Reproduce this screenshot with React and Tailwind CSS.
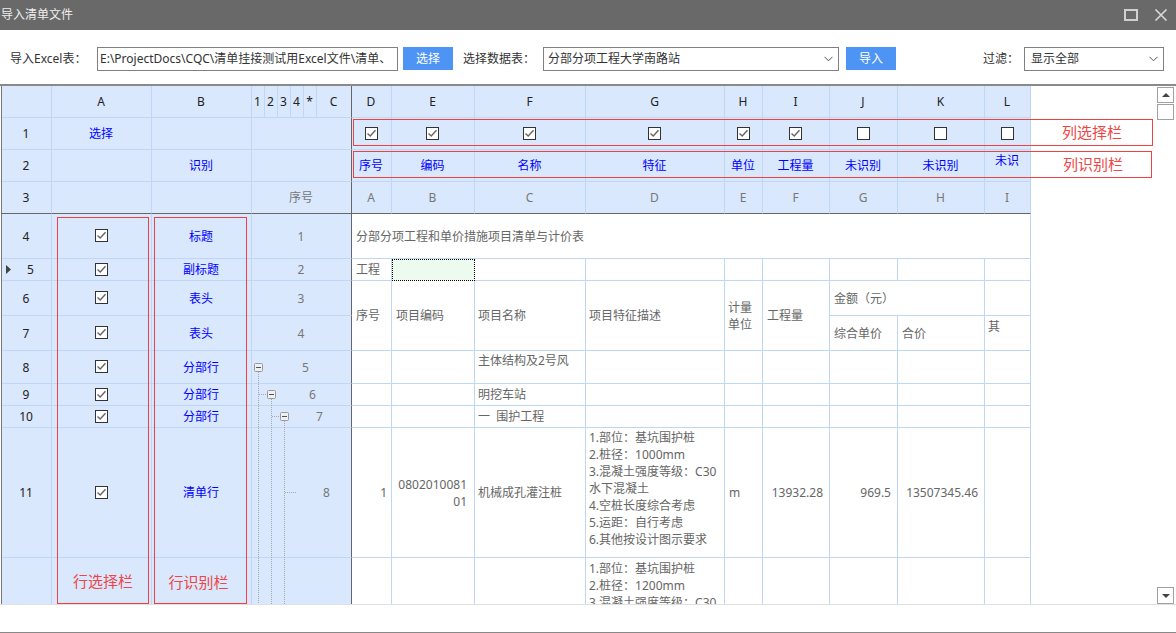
import React from 'react';

const colWidths = [
  'w-[50px]', 'w-[100px]', 'w-[100px]', 'w-[13px]', 'w-[13px]', 'w-[13px]', 'w-[13px]', 'w-[13px]', 'w-[35px]',
  'w-[40px]', 'w-[83px]', 'w-[111px]', 'w-[139px]', 'w-[38px]', 'w-[67px]', 'w-[68px]', 'w-[87px]', 'w-[46px]',
];

const rowColumns = ['D', 'E', 'F', 'G', 'H', 'I', 'J', 'K', 'L'];
const pickRow = [true, true, true, true, true, true, false, false, false];
const matchRow = ['序号', '编码', '名称', '特征', '单位', '工程量', '未识别', '未识别'];
const sourceRow = ['A', 'B', 'C', 'D', 'E', 'F', 'G', 'H', 'I'];

const spec11 = ['1.部位：基坑围护桩', '2.桩径：1000mm', '3.混凝土强度等级：C30', '水下混凝土', '4.空桩长度综合考虑', '5.运距：自行考虑', '6.其他按设计图示要求'];
const spec12 = ['1.部位：基坑围护桩', '2.桩径：1200mm', '3.混凝土强度等级：C30'];

const Check = ({ checked = true }) => (
  <div className="flex justify-center pb-px">
    <span className="flex w-[13px] h-[13px] border border-[#333] bg-white items-center justify-center">
      {checked && (
        <svg width="11" height="11" viewBox="0 0 11 11" fill="none">
          <path d="M1.5 5.5 L4.2 8 L9.5 2.2" stroke="#666" strokeWidth="1.4" />
        </svg>
      )}
    </span>
  </div>
);

const Chevron = () => (
  <svg width="9" height="6" viewBox="0 0 9 6" fill="none">
    <path d="M0.5 0.8 L4.5 4.8 L8.5 0.8" stroke="#555" strokeWidth="1" />
  </svg>
);

// frozen pane cell
const H = ({ children, className = '', ...rest }) => (
  <td {...rest} className={`bg-[#d9e8fc] border-r border-b border-[#bfd6f7] text-center p-0 pr-px overflow-hidden ${className}`}>
    {children}
  </td>
);

// data cell
const C = ({ children, className = '', ...rest }) => (
  <td {...rest} className={`bg-white border-r border-b border-[#bfd6f7] text-[#666] px-[3px] py-0 overflow-hidden ${className}`}>
    {children}
  </td>
);

const Frozen = ({ num, marker, label, tree = 'text-center', node }) => (
  <>
    <H className="text-[#222] relative">
      {marker && (
        <svg className="absolute left-[3px] top-[6px]" width="7" height="9" viewBox="0 0 7 9">
          <path d="M1 0 L6 4.5 L1 9 Z" fill="#444" />
        </svg>
      )}
      <span className={marker ? 'pl-[9px]' : ''}>{num}</span>
    </H>
    <H><Check /></H>
    <H className="text-[#0000ff]">{label}</H>
    <H colSpan={6} className={`text-[#777] border-r-[#666] ${tree}`}>{node}</H>
  </>
);

const Row = ({ h, children }) => <tr className={h}>{children}</tr>;

export default function App() {
  return (
    <div className="w-[1176px] h-[633px] bg-white overflow-hidden flex flex-col text-[12px] text-[#333] font-['Noto_Sans','Noto_Sans_CJK_SC',sans-serif]">
      {/* Title bar */}
      <div className="h-[30px] bg-[#696969] flex items-center justify-between pl-px pr-[8px] text-[#eee] shrink-0">
        <span>导入清单文件</span>
        <div className="flex items-center gap-[16px]">
          <svg width="14" height="12" viewBox="0 0 14 12" fill="none">
            <rect x="1" y="1" width="12" height="10" stroke="#d0d0d0" strokeWidth="2" />
          </svg>
          <svg width="14" height="12" viewBox="0 0 14 12" fill="none">
            <path d="M1.5 0.5 L12.5 11.5 M12.5 0.5 L1.5 11.5" stroke="#d8d8d8" strokeWidth="1.6" />
          </svg>
        </div>
      </div>

      {/* Toolbar */}
      <div className="h-[54px] shrink-0 flex items-start pt-[17px] pl-[10px] pr-[12px] text-[#333]">
        <span className="w-[87px] h-[24px] leading-[24px]">导入Excel表：</span>
        <div className="w-[301px] h-[24px] border border-[#808080] px-[2px] leading-[22px] whitespace-nowrap overflow-hidden">E:\ProjectDocs\CQC\清单挂接测试用Excel文件\清单、</div>
        <button className="ml-[5px] w-[50px] h-[23px] bg-[#4d94f5] text-white">选择</button>
        <span className="ml-[10px] w-[80px] h-[24px] leading-[24px]">选择数据表：</span>
        <div className="w-[296px] h-[24px] border border-[#808080] pl-[4px] pr-[5px] flex items-center justify-between">
          <span>分部分项工程大学南路站</span>
          <Chevron />
        </div>
        <button className="ml-[7px] w-[50px] h-[23px] bg-[#4d94f5] text-white">导入</button>
        <span className="ml-[87px] w-[41px] h-[24px] leading-[24px]">过滤：</span>
        <div className="w-[140px] h-[24px] border border-[#808080] pl-[6px] pr-[5px] flex items-center justify-between">
          <span>显示全部</span>
          <Chevron />
        </div>
      </div>

      {/* Sheet */}
      <div className="h-[521px] shrink-0 flex border-t-2 border-[#8a8a8a] border-b border-b-[#e0e0e0] pl-px pr-[2px]">
        <div className="relative flex-1 overflow-hidden border-l border-[#777]">
          <table className="table-fixed border-separate border-spacing-0 w-[1029px] leading-[17px]">
            <colgroup>
              {colWidths.map((w, i) => <col key={i} className={w} />)}
            </colgroup>
            <tbody>
              <Row h="h-[32px]">
                <H />
                <H className="text-[#222]">A</H>
                <H className="text-[#222]">B</H>
                {['1', '2', '3', '4', '*'].map((t) => <H key={t} className="text-[#222]">{t}</H>)}
                <H className="text-[#222] border-r-[#666]">C</H>
                {rowColumns.map((t) => <H key={t} className="text-[#222]">{t}</H>)}
              </Row>
              <Row h="h-[32px]">
                <H className="text-[#222]">1</H>
                <H className="text-[#0000ff]">选择</H>
                <H />
                <H colSpan={6} className="border-r-[#666]" />
                {pickRow.map((on, i) => <H key={i}><Check checked={on} /></H>)}
              </Row>
              <Row h="h-[32px]">
                <H className="text-[#222]">2</H>
                <H />
                <H className="text-[#0000ff]">识别</H>
                <H colSpan={6} className="border-r-[#666]" />
                {matchRow.map((t, i) => <H key={i} className="text-[#0000ff]">{t}</H>)}
                <H className="text-[#0000ff] align-top pt-[2px]">未识</H>
              </Row>
              <Row h="h-[32px]">
                <H className="text-[#222] border-b-[#666]">3</H>
                <H className="border-b-[#666]" />
                <H className="border-b-[#666]" />
                <H colSpan={6} className="text-[#777] text-right border-r-[#666] border-b-[#666]"><span className="pr-[37px]">序号</span></H>
                {sourceRow.map((t) => <H key={t} className="text-[#777] border-b-[#666]">{t}</H>)}
              </Row>

              <Row h="h-[45px]">
                <Frozen num="4" label="标题" node="1" />
                <C colSpan={9} className="pl-[4px]">分部分项工程和单价措施项目清单与计价表</C>
              </Row>
              <Row h="h-[22px]">
                <Frozen num="5" marker label="副标题" node="2" />
                <C className="pl-[4px]">工程</C>
                <td className="bg-[#edfbee] border border-dotted border-black p-0" />
                <C /><C /><C /><C /><C /><C /><C />
              </Row>
              <Row h="h-[35px]">
                <Frozen num="6" label="表头" node="3" />
                <C rowSpan={2} className="pl-[4px]">序号</C>
                <C rowSpan={2} className="pl-[4px]">项目编码</C>
                <C rowSpan={2}>项目名称</C>
                <C rowSpan={2}>项目特征描述</C>
                <C rowSpan={2}>计量<br />单位</C>
                <C rowSpan={2} className="pl-[4px]">工程量</C>
                <C colSpan={2} className="pl-[4px] pt-px">金额（元）</C>
                <C />
              </Row>
              <Row h="h-[35px]">
                <Frozen num="7" label="表头" node="4" />
                <C className="pl-[4px]">综合单价</C>
                <C className="pl-[4px]">合价</C>
                <C className="align-top pt-[2px]">其</C>
              </Row>
              <Row h="h-[33px]">
                <Frozen num="8" label="分部行" tree="text-left pl-[50px]" node="5" />
                <C /><C />
                <C className="align-top pt-[1px]">主体结构及2号风</C>
                <C /><C /><C /><C /><C /><C />
              </Row>
              <Row h="h-[22px]">
                <Frozen num="9" label="分部行" tree="text-left pl-[57px]" node="6" />
                <C /><C />
                <C>明挖车站</C>
                <C /><C /><C /><C /><C /><C />
              </Row>
              <Row h="h-[22px]">
                <Frozen num="10" label="分部行" tree="text-left pl-[64px]" node="7" />
                <C /><C />
                <C>一&nbsp; 围护工程</C>
                <C /><C /><C /><C /><C /><C />
              </Row>
              <Row h="h-[130px]">
                <Frozen num="11" label="清单行" tree="text-left pl-[71px]" node="8" />
                <C className="text-right pr-[4px]">1</C>
                <C className="text-right pr-[7px]">0802010081<br />01</C>
                <C>机械成孔灌注桩</C>
                <C className="align-top pt-px">{spec11.map((t) => <div key={t}>{t}</div>)}</C>
                <C className="pl-[4px]">m</C>
                <C className="text-right pr-[6px]">13932.28</C>
                <C className="text-right pr-[6px]">969.5</C>
                <C className="text-right pr-[6px]">13507345.46</C>
                <C />
              </Row>
              <Row h="h-[130px]">
                <H /><H /><H />
                <H colSpan={6} className="border-r-[#666]" />
                <C /><C /><C />
                <C className="align-top pt-[2px]">{spec12.map((t) => <div key={t}>{t}</div>)}</C>
                <C /><C /><C /><C /><C />
              </Row>
            </tbody>
          </table>

          {/* Tree guide lines over the frozen pane */}
          <svg className="absolute left-[250px] top-[264px]" width="60" height="254" viewBox="0 0 60 254" fill="none">
            <g stroke="#a8a8a8" strokeDasharray="1 1">
              <path d="M6.5 22 V254" />
              <path d="M7 44.5 H15" />
              <path d="M19.5 49 V254" />
              <path d="M20 66.5 H28" />
              <path d="M32.5 71 V254" />
              <path d="M33 142.5 H45" />
            </g>
            <g fill="#f0f0f0" stroke="#999">
              <rect x="2.5" y="13.5" width="8" height="8" rx="1" />
              <rect x="15.5" y="40.5" width="8" height="8" rx="1" />
              <rect x="28.5" y="62.5" width="8" height="8" rx="1" />
            </g>
            <g stroke="#456">
              <path d="M4 17.5 H9" />
              <path d="M17 44.5 H22" />
              <path d="M30 66.5 H35" />
            </g>
          </svg>

          {/* Annotation boxes over the grid */}
          <div className="absolute left-[55px] top-[131px] w-[92px] h-[387px] border border-[#f04040] flex items-end justify-center pb-[12px] text-[15px] leading-[20px] text-[#f04545]">行选择栏</div>
          <div className="absolute left-[152px] top-[131px] w-[93px] h-[387px] border border-[#f04040] flex items-end justify-center pb-[11px] pr-[4px] text-[15px] leading-[20px] text-[#f04545]">行识别栏</div>
          <div className="absolute left-[351px] top-[33px] w-[800px] h-[27px] border border-[#f04040] flex items-center justify-end pr-[30px] text-[15px] text-[#f04545]">列选择栏</div>
          <div className="absolute left-[351px] top-[65px] w-[799px] h-[27px] border border-[#f04040] flex items-center justify-end pr-[28px] text-[15px] text-[#f04545]">列识别栏</div>
        </div>

        {/* Scrollbar */}
        <div className="w-[17px] shrink-0 flex flex-col pt-px">
          <div className="h-[16px] border border-[#a0a0a0] flex items-center justify-center">
            <span className="w-0 h-0 border-x-[4px] border-x-transparent border-b-[4px] border-b-[#444]" />
          </div>
          <div className="h-[16px] mt-px border border-[#a0a0a0] bg-white" />
          <div className="flex-1" />
          <div className="h-[17px] border border-[#a0a0a0] flex items-center justify-center">
            <span className="w-0 h-0 border-x-[4px] border-x-transparent border-t-[4px] border-t-[#444]" />
          </div>
        </div>
      </div>

      {/* Footer */}
      <div className="flex-1 border-b border-[#888]" />
    </div>
  );
}
